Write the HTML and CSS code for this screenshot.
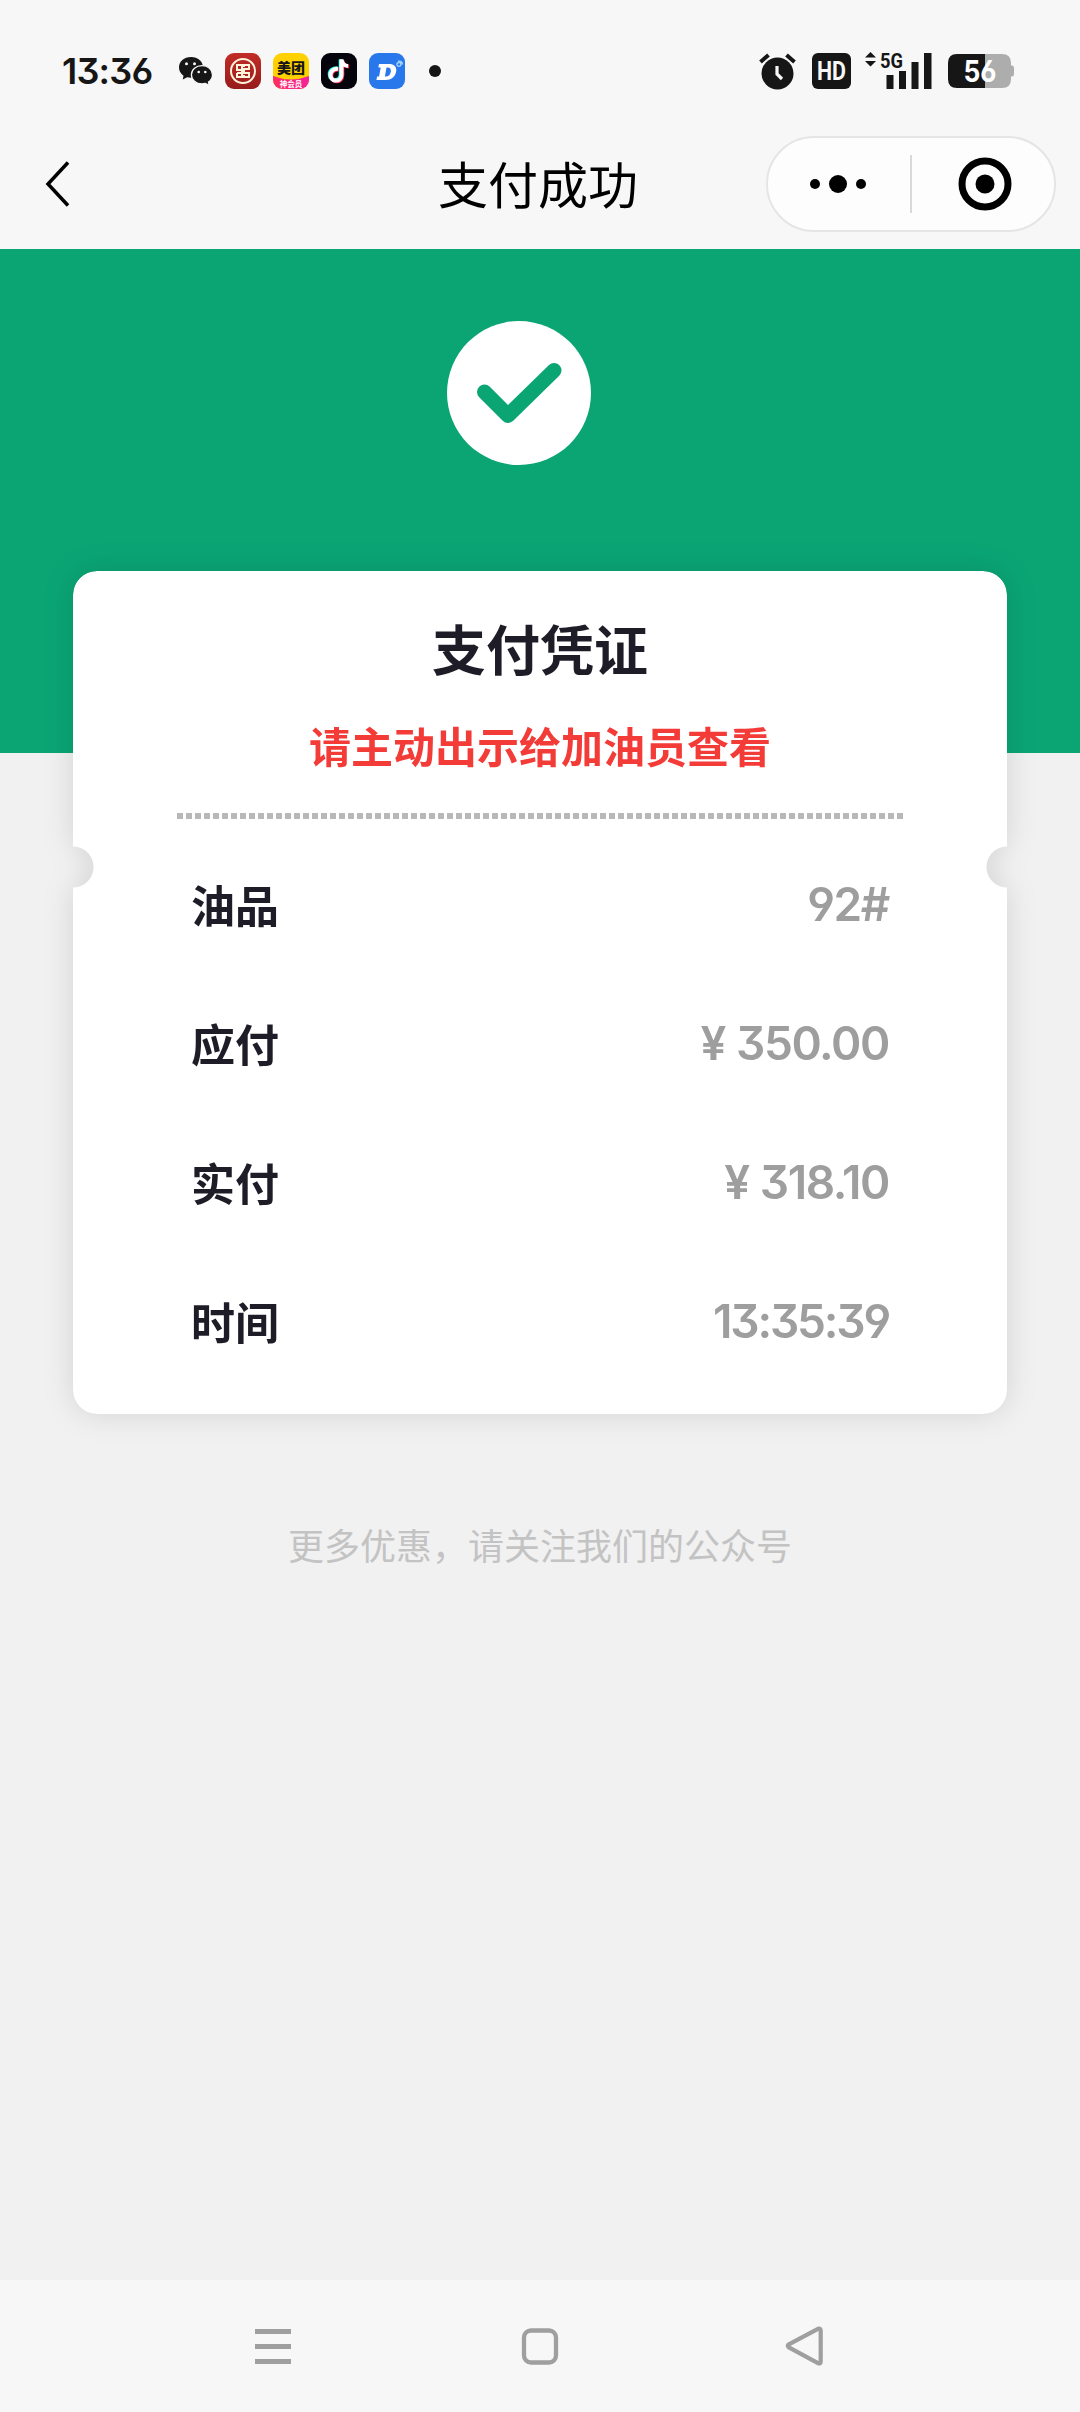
FILE: index.html
```html
<!DOCTYPE html>
<html lang="zh-CN">
<head>
<meta charset="utf-8">
<title>支付成功</title>
<link rel="stylesheet" href="styles.css">
</head>
<body>
<div class="status">
  <span class="clock">13:36</span>
  <div class="apps">
    <svg class="wechat" width="34" height="29" viewBox="0 0 34 29">
      <path fill="#161616" d="M12 0C5 0 0 4.600 0 10.500c0 3.300 1.700 6.200 4.500 8.200L3.800 22.500l4.400-2.200c1.200.3 2.400.5 3.800.5C19 20.800 24 16.400 24 10.500S19 0 12 0z"/>
      <path fill="#161616" stroke="#f7f7f7" stroke-width="1.300" d="M23 8.600c-6 0-10.600 4-10.600 9.100S17 26.900 23 26.900c1.200 0 2.300-.2 3.400-.5l3.800 2-.7-3.400c2.500-1.700 4-4.300 4-7.300 0-5.100-4.500-9.100-10.500-9.100z"/>
      <circle cx="7.500" cy="6.800" r="1.500" fill="#f7f7f7"/><circle cx="15.500" cy="6.800" r="1.500" fill="#f7f7f7"/>
      <circle cx="19.700" cy="15" r="1.300" fill="#f7f7f7"/><circle cx="26.300" cy="15" r="1.300" fill="#f7f7f7"/>
    </svg>
    <svg width="36" height="36" viewBox="0 0 36 36">
      <defs><linearGradient id="red" x1="0" y1="0" x2="0" y2="1"><stop offset="0" stop-color="#c22c27"/><stop offset="1" stop-color="#961c1b"/></linearGradient></defs>
      <rect width="36" height="36" rx="9" fill="url(#red)"/>
      <circle cx="18" cy="18" r="12" fill="none" stroke="#fff3dc" stroke-width="2"/>
      <path fill="none" stroke="#fff3dc" stroke-width="2" d="M17 12h-5v5h5v3h-5M12 20v4h5M19 12h5v4h-5v4h5v4h-5M17 11v14M19 11v3M19 22v3"/>
    </svg>
    <svg width="36" height="36" viewBox="0 0 36 36">
      <defs><clipPath id="tile"><rect width="36" height="36" rx="9"/></clipPath>
      <linearGradient id="pink"><stop offset="0" stop-color="#ff2d62"/><stop offset="1" stop-color="#f4229a"/></linearGradient></defs>
      <g clip-path="url(#tile)"><rect width="36" height="36" fill="#ffd100"/><path fill="url(#pink)" d="M0 23q18 7 36 0v13H0z"/></g>
      <text class="tile-name" x="18" y="19.500">美团</text>
      <text class="tile-tag" x="18" y="34">神会员</text>
    </svg>
    <svg width="36" height="36" viewBox="0 0 36 36">
      <rect width="36" height="36" rx="9" fill="#05040c"/>
      <g fill="none" stroke-width="4">
        <path stroke="#25f4ee" d="M16.200 15.200c-4-.3-7.500 2-7.500 6s3 5.700 5.500 5.700 5.500-1.800 5.500-5.700V6.200"/>
        <path stroke="#fe2c55" d="M17.800 16.600c-4-.3-7.500 2-7.500 6s3 5.700 5.500 5.700 5.500-1.800 5.500-5.700V7.600c.5 4 3.200 5.800 6.700 6"/>
        <path stroke="#fff" d="M17 15.900c-4-.3-7.500 2-7.500 6s3 5.700 5.500 5.700 5.500-1.800 5.500-5.700V6.400c.5 4.500 3.200 6.300 6.500 6.600"/>
      </g>
    </svg>
    <svg width="36" height="36" viewBox="0 0 36 36">
      <rect width="36" height="36" rx="9" fill="#2878ec"/>
      <path fill="#fff" fill-rule="evenodd" d="M10 11h10c5 0 8 2.600 7.200 7.300C26.300 24 22.300 27 16.500 27H7.400l.7-3.500h2l1.600-9H9.400zM17.500 14.500l-1.600 9h1c2.700 0 4.400-1.700 4.900-4.700.4-2.700-.6-4.300-3.100-4.300z"/>
      <path fill="none" stroke="#9fd0ff" stroke-width="1.500" d="M28 12.500q-.5-3 2-3t1.600 3q-1.500 1.500-3.600 0M29 8.300q4-.8 4.500 3.200"/>
    </svg>
    <svg class="more" width="12" height="12" viewBox="0 0 12 12"><circle cx="6" cy="6" r="6" fill="#161616"/></svg>
  </div>
  <div class="system">
    <svg width="38" height="38" viewBox="0 0 38 38">
      <circle cx="18.500" cy="21.500" r="16" fill="#161616"/>
      <path fill="none" stroke="#161616" stroke-width="4" d="M1.500 10l8-7M27.500 3l8 7"/>
      <path fill="none" stroke="#f7f7f7" stroke-width="3.200" d="M18 14v8l5 5"/>
    </svg>
    <svg class="hd" width="39" height="36" viewBox="0 0 39 36">
      <rect width="39" height="36" rx="6" fill="#161616"/>
      <text class="hd-text" x="19.500" y="27" textLength="29" lengthAdjust="spacingAndGlyphs">HD</text>
    </svg>
    <svg class="signal" width="67" height="46" viewBox="0 -4 67 46">
      <path fill="#161616" d="M0 5.500L5.500 0l5.500 5.500zM0 9h11l-5.500 5.500z"/>
      <text class="net" x="15" y="15.500" textLength="23" lengthAdjust="spacingAndGlyphs">5G</text>
      <path fill="#161616" d="M21.500 23h7v14h-7zM34 19h7v18h-7zM46.500 10h7v27h-7zM59 1h7.500v36H59z"/>
    </svg>
    <svg class="battery" width="66" height="34" viewBox="0 0 66 34">
      <path fill="#adadad" d="M37 0h17q9 0 9 9v2.500h1q2 0 2 2.500v6q0 2.500-2 2.500h-1V25q0 9-9 9H37z"/>
      <path fill="#161616" d="M37 0v34H9q-9 0-9-9V9q0-9 9-9z"/>
      <text class="level" x="32" y="28" textLength="33" lengthAdjust="spacingAndGlyphs">56</text>
    </svg>
  </div>
</div>
<header class="nav">
  <svg class="back" width="30" height="50" viewBox="0 0 30 50"><path fill="none" stroke="#000" stroke-width="3.500" d="M26 3.500L6 25l20 21.500"/></svg>
  <h1 class="nav-title">支付成功</h1>
  <div class="capsule">
    <svg class="dots" width="56" height="20" viewBox="0 0 56 20"><circle cx="5" cy="10" r="5"/><circle cx="28" cy="10" r="9"/><circle cx="51" cy="10" r="5"/></svg>
    <span class="split"></span>
    <svg class="target" width="54" height="54" viewBox="0 0 54 54"><circle cx="27" cy="27" r="23" fill="none" stroke="#000" stroke-width="7"/><circle cx="27" cy="27" r="9.500"/></svg>
  </div>
</header>
<main class="content">
  <div class="hero">
    <svg width="144" height="144" viewBox="0 0 144 144">
      <circle cx="72" cy="72" r="72" fill="#fff"/>
      <path fill="none" stroke="#0ba574" stroke-width="15" stroke-linecap="round" stroke-linejoin="round" d="M37.500 71L61 94.500l46-45"/>
    </svg>
  </div>
  <div class="card-shadow">
    <section class="card">
      <h2 class="title">支付凭证</h2>
      <p class="notice">请主动出示给加油员查看</p>
      <div class="perforation"></div>
      <dl class="rows">
        <div class="row"><dt>油品</dt><dd>92#</dd></div>
        <div class="row"><dt>应付</dt><dd><span class="yen">¥</span>350.00</dd></div>
        <div class="row"><dt>实付</dt><dd><span class="yen">¥</span>318.10</dd></div>
        <div class="row"><dt>时间</dt><dd class="time">13:35:39</dd></div>
      </dl>
    </section>
  </div>
  <p class="promo">更多优惠，请关注我们的公众号</p>
</main>
<footer class="system-nav">
  <svg width="40" height="44" viewBox="0 0 40 44"><path stroke="#9f9f9f" stroke-width="5" d="M2 7.500h36M2 22.500h36M2 37.500h36"/></svg>
  <svg width="40" height="44" viewBox="0 0 40 44"><rect x="5" y="6.500" width="32" height="32" rx="7" fill="none" stroke="#9f9f9f" stroke-width="4.300"/></svg>
  <svg width="40" height="44" viewBox="0 0 40 44"><path fill="none" stroke="#9f9f9f" stroke-width="4.200" stroke-linejoin="round" d="M3.800 20.300L33 4.800q2.700-1 2.700 1.700v31q0 2.700-2.700 1.700L3.800 23.300q-2-1.500 0-3z"/></svg>
</footer>
</body>
</html>
```
FILE: styles.css
```css
* { box-sizing: border-box; }
body {
  margin: 0;
  width: 1080px;
  height: 2412px;
  display: flex;
  flex-direction: column;
  overflow: hidden;
  background: #f1f1f1;
  font-family: Inter, "Noto Sans CJK SC", sans-serif;
  color: #1d1c27;
}
h1, h2, p, dl, dt, dd { margin: 0; font-weight: 400; }
svg { display: block; flex: none; }

.status {
  height: 120px;
  padding: 22px 66px 0 62px;
  display: flex;
  align-items: center;
  background: #f7f7f7;
}
.clock {
  width: 117px;
  font-size: 36px;
  font-weight: 600;
  letter-spacing: -0.8px;
  color: #161616;
  font-feature-settings: "cv09", "cv03";
}
.apps { display: flex; align-items: center; gap: 12px; }
.more { margin-left: 12px; }
.system { display: flex; align-items: center; margin-left: auto; }
.hd { margin-left: 15px; }
.signal { margin-left: 14px; }
.battery { margin-left: 16px; }
.tile-name { font: 900 14px "Noto Sans CJK SC", sans-serif; text-anchor: middle; fill: #161616; }
.tile-tag { font: 700 7.500px "Noto Sans CJK SC", sans-serif; text-anchor: middle; fill: #fff; }
.hd-text { font: 700 25px Roboto, sans-serif; text-anchor: middle; fill: #f7f7f7; }
.net { font: 700 21px Roboto, sans-serif; fill: #161616; }
.level { font: 700 30px Inter, sans-serif; text-anchor: middle; fill: #fff; font-feature-settings: "cv03"; }

.nav {
  height: 129px;
  padding: 0 24px 2px 42px;
  display: grid;
  grid-template-columns: 290px 1fr 290px;
  align-items: center;
  background: #f7f7f7;
}
.nav-title {
  padding: 0 0 3px 106px;
  font-family: "Noto Sans CJK SC", sans-serif;
  font-size: 50px;
  line-height: 72px;
  color: #000;
  white-space: nowrap;
}
.capsule {
  height: 96px;
  display: flex;
  align-items: center;
  border: 2px solid #e5e5e5;
  border-radius: 48px;
  background: #fdfdfd;
}
.dots { margin-left: 42px; }
.split { width: 2px; height: 58px; margin-left: 44px; background: #d9d9d9; }
.target { margin-left: 46px; }

.content { flex: 1; display: flex; flex-direction: column; align-items: center; }
.hero {
  align-self: stretch;
  height: 504px;
  padding: 72px 0 0 447px;
  background: #0ba574;
}
.card-shadow { margin-top: -182px; filter: drop-shadow(0 0 15px rgba(0, 0, 0, 0.12)); }
.card {
  width: 934px;
  height: 843px;
  padding: 38px 104px 0;
  border-radius: 24px;
  background: #fff;
  text-align: center;
  font-family: "Noto Sans CJK SC", sans-serif;
  -webkit-mask:
    radial-gradient(circle at 0 296px, transparent 20px, #000 21px) left / 50% 100% no-repeat,
    radial-gradient(circle at 100% 296px, transparent 20px, #000 21px) right / 50% 100% no-repeat;
}
.title { font-size: 54px; font-weight: 700; line-height: 78px; }
.notice { margin-top: 28px; font-size: 42px; font-weight: 700; line-height: 60px; color: #f33b38; }
.perforation {
  height: 6px;
  margin-top: 38px;
  background: repeating-linear-gradient(90deg, #b8b8b8 0 6px, transparent 6px 9px);
}
.rows { padding: 15px 14px 0; }
.row { height: 139px; display: flex; align-items: center; justify-content: space-between; }
.row dt { font-size: 44px; font-weight: 700; }
.row dd {
  font-family: Inter, sans-serif;
  font-size: 46px;
  font-weight: 600;
  color: #9e9e9e;
  letter-spacing: -1.400px;
  font-feature-settings: "cv09", "cv04";
}
.row .time { letter-spacing: -2.200px; }
.yen { margin-right: 11px; }
.promo {
  margin-top: 104px;
  font-family: "Noto Sans CJK SC", sans-serif;
  font-size: 36px;
  font-weight: 400;
  line-height: 52px;
  color: #c3c3c3;
}
.system-nav {
  height: 132px;
  padding: 0 255px 0 253px;
  display: flex;
  align-items: center;
  justify-content: space-between;
  background: #f7f7f7;
}
```
